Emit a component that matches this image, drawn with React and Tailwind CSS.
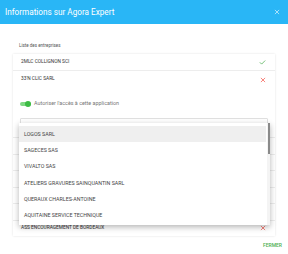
import React from "react";

const CheckIcon = () => (
  <svg width="7" height="7" viewBox="0 0 24 24" fill="none" stroke="#4caf50" strokeWidth="2.6" strokeLinecap="square">
    <path d="M4 12.5l5 5L20 6.5" />
  </svg>
);

const XIcon = ({ color = "#f44336", size = 6, sw = 2.6 }) => (
  <svg width={size} height={size} viewBox="0 0 24 24" fill="none" stroke={color} strokeWidth={sw} strokeLinecap="square">
    <path d="M5 5l14 14M19 5L5 19" />
  </svg>
);

const items = [
  "LOGOS SARL",
  "SAGECES SAS",
  "VIVALTO SAS",
  "ATELIERS GRAVURES SAINQUANTIN SARL",
  "QUERAUX CHARLES-ANTOINE",
  "AQUITAINE SERVICE TECHNIQUE",
];

export default function App() {
  return (
    <div className="relative w-[288px] h-[254px] overflow-hidden bg-white font-['Roboto',sans-serif]">
      <div className="h-[24px] bg-[#29b6f6] flex items-center justify-between pl-[5px] pr-[8px]">
        <span className="text-white text-[8.2px] leading-none">Informations sur Agora Expert</span>
        <XIcon color="#ffffff" size={6} sw={2.4} />
      </div>

      <div className="px-[13px]">
        <div className="mt-[19px] mb-[5px] h-[6px] flex items-center pl-[6px] text-[4.5px] text-[#555] leading-none">
          Liste des entreprises
        </div>

        <div className="bg-white shadow-[0_0_2px_rgba(0,0,0,0.12)]">
          <div className="h-[17px] flex items-center justify-between pl-[8px] pr-[9px] border-b border-[#ededed]">
            <span className="text-[4.8px] text-[#333] leading-none">2MLC COLLIGNON SCI</span>
            <CheckIcon />
          </div>
          <div className="h-[17px] flex items-center justify-between pl-[8px] pr-[9px]">
            <span className="text-[4.8px] text-[#333] leading-none">33'N CLIC SARL</span>
            <XIcon />
          </div>

          <div className="pt-[13px] pl-[6px] flex items-center gap-[3px]">
            <div className="relative w-[12px] h-[6px]">
              <div className="absolute left-[1px] right-0 top-[1px] h-[4px] rounded-full bg-[#7fd883]" />
              <div className="absolute right-0 top-0 w-[6px] h-[6px] rounded-full bg-[#3dbb45]" />
            </div>
            <span className="text-[5.4px] text-[#777] leading-none">Autoriser l'accès à cette application</span>
          </div>

          <div className="mt-[11px] mx-[7px] h-[16px] border border-[#e0e0e0] rounded-[1px]" />

          <div className="mt-[3px]">
            {[0, 1, 2, 3, 4].map((i) => (
              <div key={i} className="h-[16.5px] border-t border-[#ececec]" />
            ))}
            <div className="h-[16px] border-t border-[#ececec] flex items-center justify-between pl-[8px] pr-[9px]">
              <span className="text-[4.8px] text-[#333] leading-none">ASS ENCOURAGEMENT DE BORDEAUX</span>
              <XIcon />
            </div>
          </div>
        </div>
      </div>

      <div className="mt-[7px] flex justify-end pr-[6px]">
        <span className="text-[5px] font-medium text-[#4caf50] leading-none">FERMER</span>
      </div>

      <div className="absolute left-[19px] top-[123px] w-[251px] h-[102px] bg-white shadow-[0_2px_6px_rgba(0,0,0,0.3)] pt-[3px]">
        {items.map((t, i) => (
          <div
            key={t}
            className={
              "h-[16.33px] flex items-center pl-[5px] mr-[4px] text-[5.3px] text-[#444] leading-none " +
              (i === 0 ? "bg-[#efefef]" : "")
            }
          >
            {t}
          </div>
        ))}
        <div className="absolute right-0 top-0 bottom-0 w-[3px] bg-[#f4f4f4]">
          <div className="w-[2.5px] ml-[0.5px] h-[31px] bg-[#8a8a8a]" />
        </div>
      </div>
    </div>
  );
}
